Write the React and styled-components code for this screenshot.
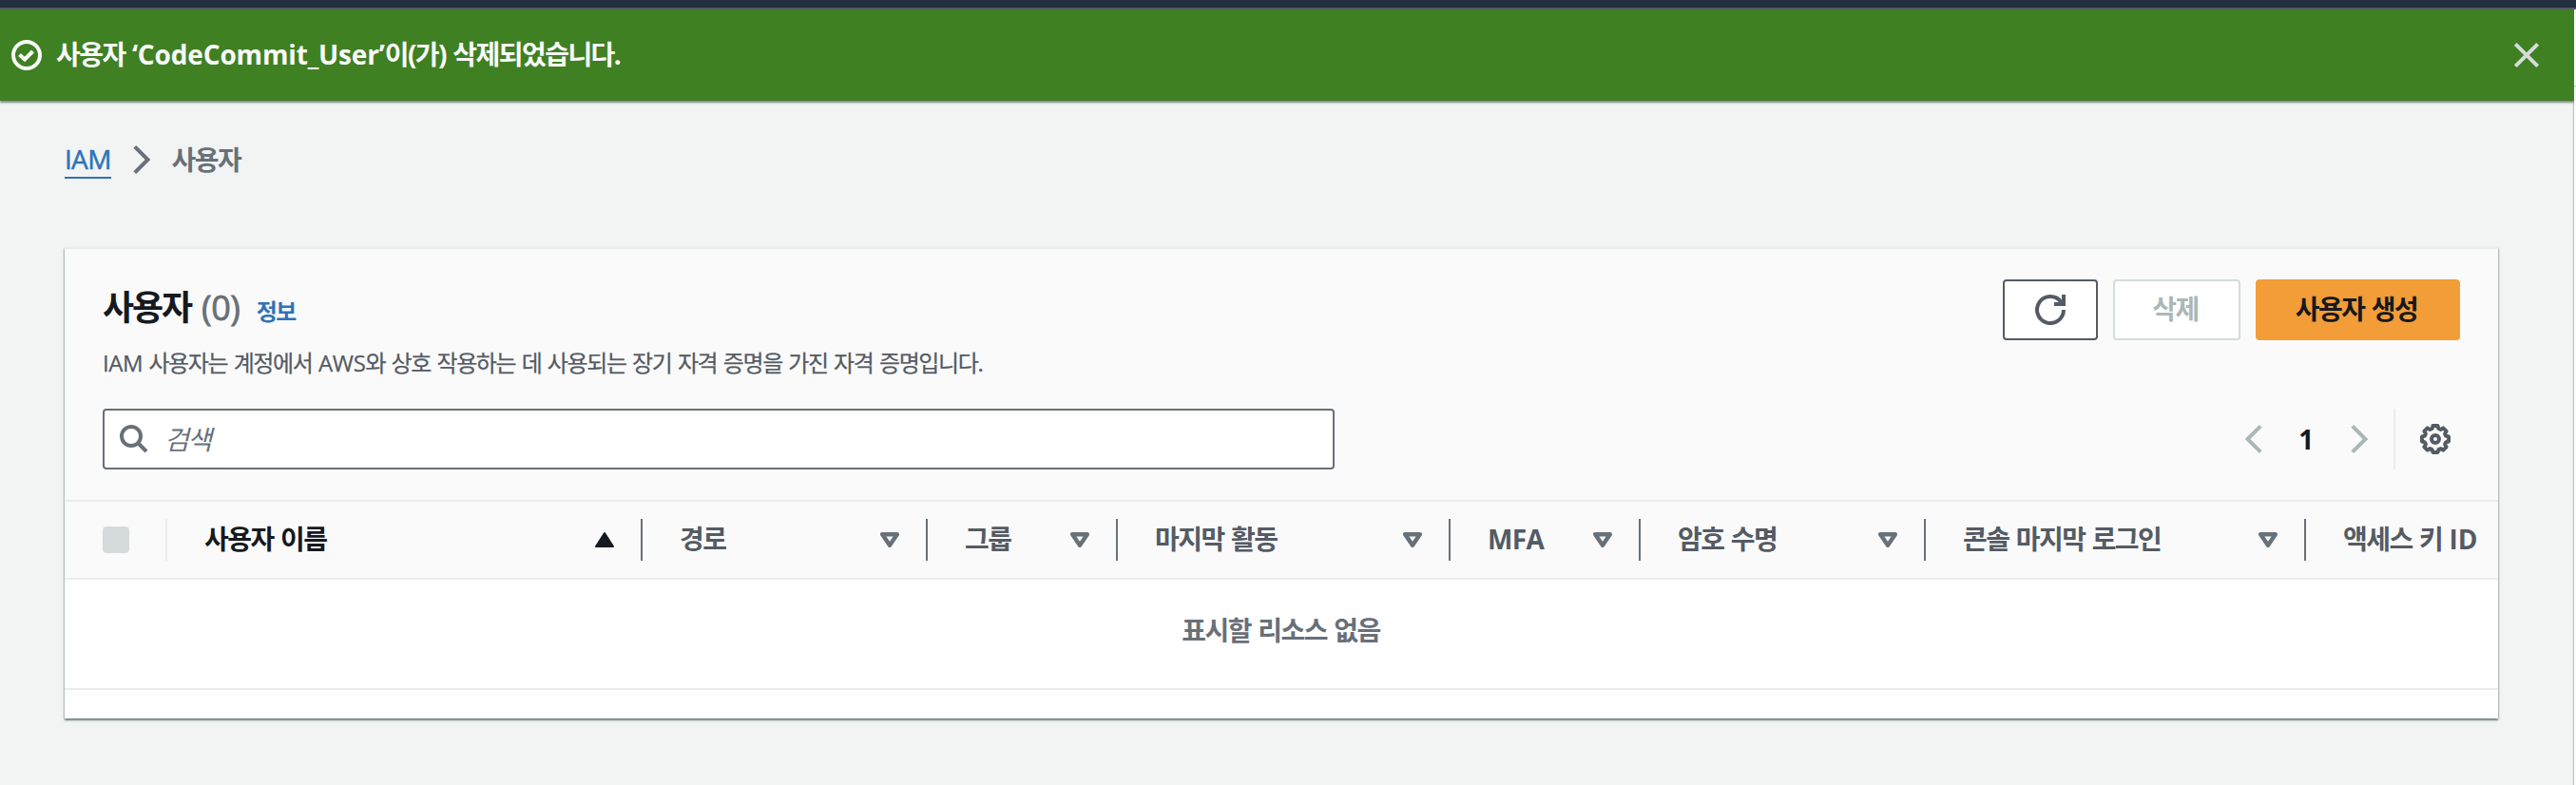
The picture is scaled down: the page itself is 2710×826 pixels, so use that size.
import React from "react";
import styled, { createGlobalStyle } from "styled-components";

const Global = createGlobalStyle`
  *, *::before, *::after { box-sizing: border-box; }
  html, body { margin: 0; padding: 0; }
  body {
    background: #f2f3f3;
    color: #16191f;
    font-family: "Open Sans", "Noto Sans CJK KR", sans-serif;
    font-size: 28px;
    line-height: 44px;
    letter-spacing: -0.055em;
    word-spacing: 0.055em;
    overflow: hidden;
  }
  svg { display: block; flex: none; }
`;

const Page = styled.div`
  display: flex;
  flex-direction: column;
  height: 826px;
`;

const TopNav = styled.div`
  flex: none;
  height: 10px;
  background: #232f3e;
  border-bottom: 2px solid #545b64;
`;

const Body = styled.div`
  flex: 1;
  display: flex;
  min-height: 0;
`;

const Main = styled.main`
  flex: 1;
  min-width: 0;
  background: #f2f3f3;
  box-shadow: inset -2px 0 1px -1px #b5babd;
`;

const HelpRail = styled.aside`
  flex: none;
  width: 2px;
  background: #fff;
  &::before {
    content: "";
    display: block;
    height: 82px;
    background: #fafafa;
    border-bottom: 2px solid #d5dbdb;
  }
`;

const Flash = styled.div`
  display: flex;
  align-items: center;
  height: 96px;
  padding: 0 36px 0 12px;
  background: #3f8023;
  color: #fafafa;
  font-weight: 700;
  box-shadow: 0 2px 2px rgba(0, 28, 36, 0.5);
`;

const FlashText = styled.div`
  flex: 1;
  padding: 0 0 2px 15px;
`;

const Latin = styled.span`
  letter-spacing: ${(p) => p.$ls || "0"};
`;

const IconButton = styled.button`
  display: flex;
  padding: 0;
  border: 0;
  background: none;
`;

const Breadcrumbs = styled.nav`
  display: flex;
  align-items: center;
  height: 44px;
  margin: 40px 0 70px;
  padding-left: 68px;
  svg { margin: 0 22px 0 23px; }
`;

const Crumb = styled.a`
  height: 40px;
  line-height: 38px;
  color: #2e73b8;
  letter-spacing: -0.025em;
  -webkit-text-stroke: 0.5px currentColor;
  border-bottom: 2px solid #2e73b8;
`;

const CurrentCrumb = styled.span`
  color: #687078;
  font-weight: 700;
`;

const Card = styled.section`
  margin: 0 80px 0 68px;
  height: 496px;
  background: #fff;
  border-top: 2px solid #eaeded;
  box-shadow: 0 2px 2px rgba(0, 28, 36, 0.45), 1px 1px 2px rgba(0, 28, 36, 0.15), -1px 1px 2px rgba(0, 28, 36, 0.15);
`;

const CardHeader = styled.header`
  height: 266px;
  padding: 32px 40px 0;
  background: #fafafa;
  border-bottom: 2px solid #eaeded;
`;

const TitleRow = styled.div`
  display: flex;
  justify-content: space-between;
  height: 64px;
`;

const Heading = styled.h2`
  display: flex;
  align-items: baseline;
  margin: 0;
  font-size: 36px;
  line-height: 59px;
  font-weight: 700;
  letter-spacing: -0.06em;
`;

const Count = styled.span`
  margin-left: 11px;
  color: #687078;
  font-weight: 400;
  letter-spacing: -0.01em;
  -webkit-text-stroke: 0.8px currentColor;
`;

const InfoLink = styled.a`
  margin-left: 17px;
  color: #2e73b8;
  font-size: 24px;
  letter-spacing: -0.06em;
`;

const Actions = styled.div`
  display: flex;
  gap: 16px;
`;

const Button = styled.button`
  display: flex;
  align-items: center;
  justify-content: center;
  width: ${(p) => p.$width}px;
  height: 64px;
  padding: ${(p) => (p.$icon ? "0" : "0 3px 2px 0")};
  border: 2px solid ${(p) => p.$border};
  border-radius: 4px;
  background: ${(p) => p.$bg || "#fff"};
  color: ${(p) => p.$color};
  font: inherit;
  font-weight: 700;
  letter-spacing: inherit;
  word-spacing: inherit;
`;

const Description = styled.p`
  height: 72px;
  margin: 0;
  padding-top: 2px;
  color: #545b64;
  font-size: 24px;
  line-height: 44px;
  letter-spacing: -0.057em;
  -webkit-text-stroke: 0.25px currentColor;
  white-space: nowrap;
`;

const ToolRow = styled.div`
  display: flex;
  align-items: center;
  justify-content: space-between;
  height: 64px;
`;

const Search = styled.label`
  display: flex;
  align-items: center;
  width: 1296px;
  height: 64px;
  padding-left: 16px;
  border: 2px solid #687078;
  border-radius: 4px;
  background: #fff;
  color: #687078;
  font-style: italic;
  gap: 17px;
`;

const Pager = styled.div`
  display: flex;
  align-items: center;
  height: 64px;
`;

const PageNumber = styled.span`
  width: 93px;
  padding-right: 2px;
  text-align: center;
  font-weight: 700;
`;

const Settings = styled.div`
  display: flex;
  align-items: center;
  height: 64px;
  margin-left: 26px;
  padding: 0 10px 0 26px;
  border-left: 2px solid #eaeded;
`;

const HeadRow = styled.div`
  display: flex;
  height: 82px;
  background: #fafafa;
  border-bottom: 2px solid #eaeded;
  font-weight: 700;
`;

const HeadCell = styled.div`
  display: flex;
  align-items: center;
  justify-content: space-between;
  flex: none;
  width: ${(p) => p.$width}px;
  height: 44px;
  margin-top: 18px;
  padding: 0 28px 0 ${(p) => (p.$line ? 40 : 39)}px;
  border-right: ${(p) => (p.$last ? "0" : `2px solid ${p.$line || "#687078"}`)};
  color: ${(p) => (p.$active ? "#16191f" : "#545b64")};
  white-space: nowrap;
`;

const HeadLabel = styled.span`
  height: 44px;
  line-height: 43px;
`;

const Checkbox = styled.span`
  width: 28px;
  height: 28px;
  border-radius: 4px;
  background: #d5dbdb;
`;

const Empty = styled.div`
  height: 116px;
  padding: 31px 1px 0 0;
  border-bottom: 2px solid #eaeded;
  color: #687078;
  font-weight: 700;
  text-align: center;
`;

const CheckCircle = () => (
  <svg width="32" height="32" viewBox="0 0 32 32" fill="none" stroke="#fafafa" strokeWidth="4">
    <circle cx="16" cy="16" r="14" />
    <path d="M8.5 15.5 L14 20.5 L22.5 12" />
  </svg>
);

const Close = () => (
  <svg width="28" height="28" viewBox="0 0 28 28" fill="none" stroke="#d5dbdb" strokeWidth="4">
    <path d="M2.3 2.3 L25.7 25.7 M25.7 2.3 L2.3 25.7" />
  </svg>
);

const Chevron = ({ color, left }) => (
  <svg width="19" height="32" viewBox="0 0 19 32" fill="none" stroke={color} strokeWidth="4">
    <path d={left ? "M17.2 2.3 L3.5 16 L17.2 29.7" : "M1.8 2.3 L15.5 16 L1.8 29.7"} />
  </svg>
);

const Refresh = () => (
  <svg width="32" height="32" viewBox="0 0 32 32" fill="none" stroke="#545b64" strokeWidth="4">
    <path d="M30 16 A14 14 0 1 1 27.2 7.6 L29 10" />
    <path d="M20 10 H30 V0" />
  </svg>
);

const Magnifier = () => (
  <svg width="30" height="30" viewBox="0 0 30 30" fill="none" stroke="#687078" strokeWidth="4">
    <circle cx="12" cy="12" r="10" />
    <path d="M19 19 L28 28" />
  </svg>
);

const Gear = () => (
  <svg width="32" height="32" viewBox="0 0 32 32" fill="none" stroke="#545b64" strokeWidth="4">
    <path
      strokeLinejoin="round"
      d="M13.5 2 H18.5 L19.4 5 L21.6 5.9 L24.3 4.4 L27.6 7.7 L26.1 10.4 L27 12.6 L30 13.5 V18.5 L27 19.4 L26.1 21.6 L27.6 24.3 L24.3 27.6 L21.6 26.1 L19.4 27 L18.5 30 H13.5 L12.6 27 L10.4 26.1 L7.7 27.6 L4.4 24.3 L5.9 21.6 L5 19.4 L2 18.5 V13.5 L5 12.6 L5.9 10.4 L4.4 7.7 L7.7 4.4 L10.4 5.9 L12.6 5 Z"
    />
    <circle cx="16" cy="16" r="4" />
  </svg>
);

const SortIcon = ({ active }) => (
  <svg width="20" height="16" viewBox="0 0 20 16" strokeLinejoin="round">
    {active ? (
      <path d="M10 1 L19 15 H1 Z" fill="#16191f" stroke="#16191f" strokeWidth="2" />
    ) : (
      <path d="M2.2 2.2 H17.8 L10 13.8 Z" fill="none" stroke="#687078" strokeWidth="4.4" />
    )}
  </svg>
);

const columns = [
  { label: "사용자 이름", width: 500, active: true },
  { label: "경로", width: 300 },
  { label: "그룹", width: 200 },
  { label: "마지막 활동", width: 350 },
  { label: "MFA", width: 200, latin: true },
  { label: "암호 수명", width: 300 },
  { label: "콘솔 마지막 로그인", width: 400 },
  { label: "액세스 키 ", suffix: "ID", width: 202, last: true },
];

export default function App() {
  return (
    <Page>
      <Global />
      <TopNav />
      <Body>
        <Main>
          <Flash>
            <CheckCircle />
            <FlashText>
              사용자 <Latin $ls="-0.15px">‘CodeCommit_User’</Latin>이(가) 삭제되었습니다.
            </FlashText>
            <IconButton><Close /></IconButton>
          </Flash>
          <Breadcrumbs>
            <Crumb>IAM</Crumb>
            <Chevron color="#687078" />
            <CurrentCrumb>사용자</CurrentCrumb>
          </Breadcrumbs>
          <Card>
            <CardHeader>
              <TitleRow>
                <Heading>
                  사용자<Count>(0)</Count>
                  <InfoLink>정보</InfoLink>
                </Heading>
                <Actions>
                  <Button $icon $width={100} $border="#545b64"><Refresh /></Button>
                  <Button $width={134} $border="#d5dbdb" $color="#aab7b8">삭제</Button>
                  <Button $width={215} $border="#f29d38" $bg="#f29d38" $color="#16191f">사용자 생성</Button>
                </Actions>
              </TitleRow>
              <Description>
                <Latin $ls="-0.5px">IAM</Latin> 사용자는 계정에서 <Latin $ls="-0.3px">AWS</Latin>와 상호 작용하는 데 사용되는 장기 자격 증명을 가진 자격 증명입니다.
              </Description>
              <ToolRow>
                <Search><Magnifier />검색</Search>
                <Pager>
                  <Chevron color="#aab7b8" left />
                  <PageNumber>1</PageNumber>
                  <Chevron color="#aab7b8" />
                  <Settings><Gear /></Settings>
                </Pager>
              </ToolRow>
            </CardHeader>
            <HeadRow>
              <HeadCell $width={108} $line="#eaeded"><Checkbox /></HeadCell>
              {columns.map((c) => (
                <HeadCell key={c.label} $width={c.width} $active={c.active} $last={c.last}>
                  <HeadLabel>
                    {c.latin ? <Latin $ls="-0.6px">{c.label}</Latin> : c.label}
                    {c.suffix && <Latin>{c.suffix}</Latin>}
                  </HeadLabel>
                  {!c.last && <SortIcon active={c.active} />}
                </HeadCell>
              ))}
            </HeadRow>
            <Empty>표시할 리소스 없음</Empty>
          </Card>
        </Main>
        <HelpRail />
      </Body>
    </Page>
  );
}
